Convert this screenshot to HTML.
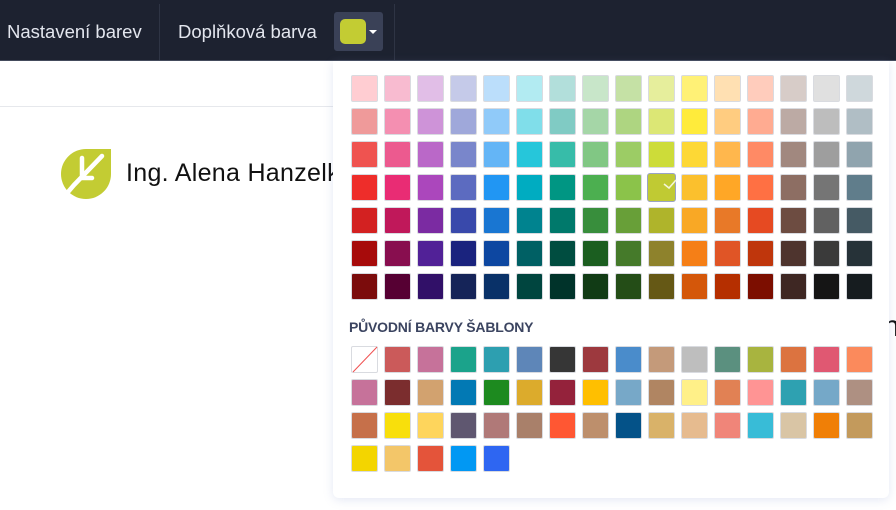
<!DOCTYPE html>
<html><head><meta charset="utf-8"><style>
*{margin:0;padding:0;box-sizing:border-box}
body{width:896px;height:510px;overflow:hidden;background:#fff;font-family:"Liberation Sans",sans-serif;position:relative}
.top{position:absolute;left:0;top:0;width:896px;height:61px;background:#1d2230;border-bottom:1px solid #444b5c}
.t{position:absolute;color:#e3e6ee;font-size:18.5px;top:21px}
.div{position:absolute;top:4px;width:1px;height:56px;background:#2e3444}
.btn{position:absolute;left:334px;top:12px;width:49px;height:39px;background:#3a4157;border-radius:3px}
.sw{position:absolute;left:340px;top:19px;width:26px;height:25px;background:#c3cc33;border-radius:5px}
.car{position:absolute;left:369px;top:30px;width:0;height:0;border-left:4px solid transparent;border-right:4px solid transparent;border-top:4px solid #fff}
.line{position:absolute;left:0;top:106px;width:340px;height:1px;background:#e6e8ec}
.pop{position:absolute;left:333px;top:61px;width:556px;height:437px;background:#fff;border-radius:0 0 6px 6px;box-shadow:0 2px 10px rgba(120,140,200,.2)}
.c{position:absolute;width:27px;height:27px;border:1px solid #d9dbe0;border-radius:2px}
.h{position:absolute;left:349px;top:319px;font-size:14px;color:#3b4460;font-weight:bold;letter-spacing:-.2px}
</style></head><body>
<div class="top">
<div class="t" style="left:7px">Nastavení barev</div>
<div class="div" style="left:159px"></div>
<div class="t" style="left:178px">Doplňková barva</div>
<div class="div" style="left:394px"></div>
</div>
<div class="btn"></div><div class="sw"></div><div class="car"></div>
<div class="line"></div>
<svg style="position:absolute;left:60px;top:148px" width="52" height="52" viewBox="0 0 52 52">
<path d="M26 1 H51 V26 A25 25 0 1 1 26 1Z" fill="#c3cc33"/>
<path d="M42 8 L14 37 M22 10 V30 H32 M14 37 L8 44" stroke="#fff" stroke-width="4.5" fill="none" stroke-linecap="round"/>
</svg>
<div style="position:absolute;left:126px;top:159px;font-size:25px;color:#111;letter-spacing:.3px">Ing. Alena Hanzelk</div>
<div style="position:absolute;left:883px;top:310px;font-size:30px;color:#111">n</div>
<div class="pop"></div>
<div class="h">PŮVODNÍ BARVY ŠABLONY</div>
<div id="g"></div>
<svg style="position:absolute;left:662px;top:177px" width="16" height="14"><path d="M2 7 L7 11 L14 3" stroke="#f4f6d8" stroke-width="1.6" fill="none"/></svg>
<script>
var rows=[
["#ffcdd2","#f8bbd0","#e1bee7","#c5cae9","#bbdefb","#b2ebf2","#b2dfdb","#c8e6c9","#c5e1a5","#e6ee9c","#fff176","#ffe0b2","#ffccbc","#d7ccc8","#e0e0e0","#cfd8dc"],
["#ef9a9a","#f48fb1","#ce93d8","#9fa8da","#90caf9","#80deea","#80cbc4","#a5d6a7","#aed581","#dce775","#ffeb3b","#ffcc80","#ffab91","#bcaaa4","#bdbdbd","#b0bec5"],
["#ef5350","#ec5a8f","#ba68c8","#7986cb","#64b5f6","#26c6da","#37bca9","#81c784","#9ccc65","#cddc39","#fdd835","#ffb74d","#ff8a65","#a1887f","#9e9e9e","#90a4ae"],
["#ee2d2a","#e92c74","#ab47bc","#5c6bc0","#2196f3","#00acc1","#009683","#4caf50","#8bc34a","#c0ca33","#fbc02d","#ffa726","#ff7043","#8d6e63","#757575","#607d8b"],
["#d32121","#c0185a","#7b2ba2","#3949ab","#1976d2","#00838f","#00796b","#388e3c","#689f38","#afb42b","#f9a825","#e87928","#e64a22","#6d4c41","#616161","#455a64"],
["#a70b0b","#880e4f","#512197","#1a237e","#0d47a1","#006064","#004d40","#1b5e20","#457a2a","#8e822c","#f57f17","#e05526","#bf360c","#4e342e","#3a3a3a","#263238"],
["#7b0c0c","#560033","#311068","#152458","#093168","#00453f","#00332a","#113b15","#244d17","#655815","#d4570a","#b52f00","#7c0e00","#3e2723","#151515","#161c1f"]];
var t=[
["#fff","#cb5a5a","#c6729a","#1ba38b","#2d9fb0","#5e86b8","#363636","#9d393e","#4a8ccb","#c49a7a","#bebebe","#5b907f","#a8b43f","#dc7340","#e05872","#fb8a5c"],
["#c6729a","#7b2d2e","#d2a26f","#0279b4","#1d8a1f","#dcab2c","#94223b","#ffbf00","#77a8c8","#b08562","#fff088","#e18154","#ff9494","#2ea1b1","#75a8c8","#ae9082"],
["#c6704a","#f8df0c","#fed55c","#5f5770","#b07978","#a9806a","#ff5733","#bd8f6c","#045288","#d9b269","#e6bb8f","#f08579","#38bcd7","#d9c5a5","#f07f06","#c39a5c"],
["#f3d500","#f3c669","#e4543a","#0198f3","#2e66f2"]];
var h="";
rows.forEach(function(r,i){r.forEach(function(c,j){var x=351+j*33,y=75+i*33;
if(i==3&&j==9)h+='<div class="c" style="left:'+(x-1)+'px;top:'+(y-1)+'px;width:29px;height:29px;background:'+c+';border:1px solid #9aa3c4;border-radius:3px"></div>';
else h+='<div class="c" style="left:'+x+'px;top:'+y+'px;background:'+c+'"></div>';});});
t.forEach(function(r,i){r.forEach(function(c,j){var x=351+j*33,y=346+i*33;
h+='<div class="c" style="left:'+x+'px;top:'+y+'px;background:'+c+'"></div>';});});
h+='<svg style="position:absolute;left:351px;top:346px" width="27" height="27"><line x1="2" y1="26" x2="26" y2="1" stroke="#f05050" stroke-width="1"/></svg>';
document.getElementById("g").innerHTML=h;
</script>
</body></html>
